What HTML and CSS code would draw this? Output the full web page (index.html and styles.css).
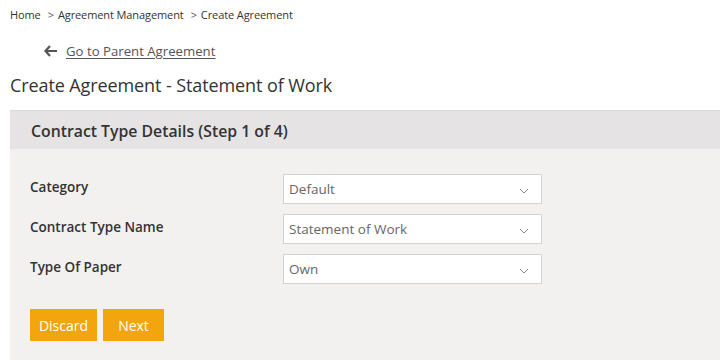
FILE: index.html
```html
<!DOCTYPE html>
<html lang="en">
<head>
    <meta charset="UTF-8">
    <meta name="viewport" content="width=device-width, initial-scale=1.0">
    <title>Create Agreement</title>
    <link rel="stylesheet" href="styles.css">
</head>
<body>
    <div class="breadcrumb">
        <a href="#">Home</a>
        <span class="sep">&gt;</span>
        <a href="#">Agreement Management</a>
        <span class="sep">&gt;</span>
        <span>Create Agreement</span>
    </div>

    <div class="back-link">
        <svg width="14" height="12" viewBox="0 0 14 12">
            <path d="M6 1 L1.5 6 L6 11 M2 6 H13" fill="none" stroke="#555" stroke-width="2.2" stroke-linejoin="miter"></path>
        </svg>
        <a href="#">Go to Parent Agreement</a>
    </div>

    <h1 class="page-title">Create Agreement - Statement of Work</h1>

    <div class="panel">
        <div class="panel-header">Contract Type Details (Step 1 of 4)</div>
        <div class="panel-body">
            <div class="form-row">
                <label class="form-label">Category</label>
                <div class="select-box">
                    <span>Default</span>
                    <svg class="chevron" width="10" height="6" viewBox="0 0 10 6"><path d="M1 1 L5 5 L9 1" fill="none" stroke="#888" stroke-width="1"></path></svg>
                </div>
            </div>
            <div class="form-row">
                <label class="form-label">Contract Type Name</label>
                <div class="select-box">
                    <span>Statement of Work</span>
                    <svg class="chevron" width="10" height="6" viewBox="0 0 10 6"><path d="M1 1 L5 5 L9 1" fill="none" stroke="#888" stroke-width="1"></path></svg>
                </div>
            </div>
            <div class="form-row">
                <label class="form-label">Type Of Paper</label>
                <div class="select-box">
                    <span>Own</span>
                    <svg class="chevron" width="10" height="6" viewBox="0 0 10 6"><path d="M1 1 L5 5 L9 1" fill="none" stroke="#888" stroke-width="1"></path></svg>
                </div>
            </div>
            <div class="buttons">
                <button class="btn btn-discard">Discard</button>
                <button class="btn btn-next">Next</button>
            </div>
        </div>
    </div>
</body>
</html>
```

FILE: styles.css
```css
body {
    font-family: "Open Sans", "Noto Sans", sans-serif;
    margin: 0;
    padding: 0;
    background-color: #fff;
    color: #333;
    overflow: hidden;
}

a {
    color: inherit;
    text-decoration: none;
}

.breadcrumb {
    display: flex;
    align-items: center;
    gap: 4px;
    padding: 5px 0 0 10px;
    height: 19px;
    font-size: 11px;
    color: #333;
    letter-spacing: -0.1px;
}

.breadcrumb .sep {
    margin-left: 3px;
    color: #555;
}

.back-link {
    display: flex;
    align-items: center;
    gap: 8px;
    margin: 17px 0 0 44px;
    height: 20px;
    font-size: 13.2px;
}

.back-link a {
    color: #555;
    text-decoration: underline;
    text-underline-offset: 2px;
}

.page-title {
    margin: 11px 0 0 10px;
    font-size: 18px;
    font-weight: 400;
    color: #333;
    line-height: 26px;
    letter-spacing: -0.1px;
}

.panel {
    margin: 12px 0 0 10px;
    border-top: 1px solid #dadada;
}

.panel-header {
    background-color: #e5e3e4;
    height: 38px;
    line-height: 40px;
    padding-left: 21px;
    font-size: 15.8px;
    font-weight: 600;
    color: #333;
}

.panel-body {
    background-color: #f2f1f0;
    padding: 25px 0 19px 20px;
}

.form-row {
    display: flex;
    align-items: center;
    height: 30px;
    margin-bottom: 10px;
}

.form-label {
    width: 253px;
    font-size: 13.5px;
    font-weight: 600;
    color: #333;
    margin-top: -5px;
}

.select-box {
    display: flex;
    align-items: center;
    justify-content: space-between;
    box-sizing: border-box;
    width: 259px;
    height: 30px;
    background-color: #fff;
    border: 1px solid #d2d2d2;
    padding: 0 12px 0 5px;
    font-size: 13.5px;
    color: #666;
}

.chevron {
    margin-top: 3px;
}

.buttons {
    display: flex;
    gap: 6px;
    margin-top: 25px;
}

.btn {
    height: 32px;
    padding: 0;
    background-color: #f2a50c;
    border: none;
    color: #fff;
    font-family: inherit;
    font-size: 14px;
    cursor: pointer;
}

.btn-discard {
    width: 67px;
}

.btn-next {
    width: 61px;
}
```
